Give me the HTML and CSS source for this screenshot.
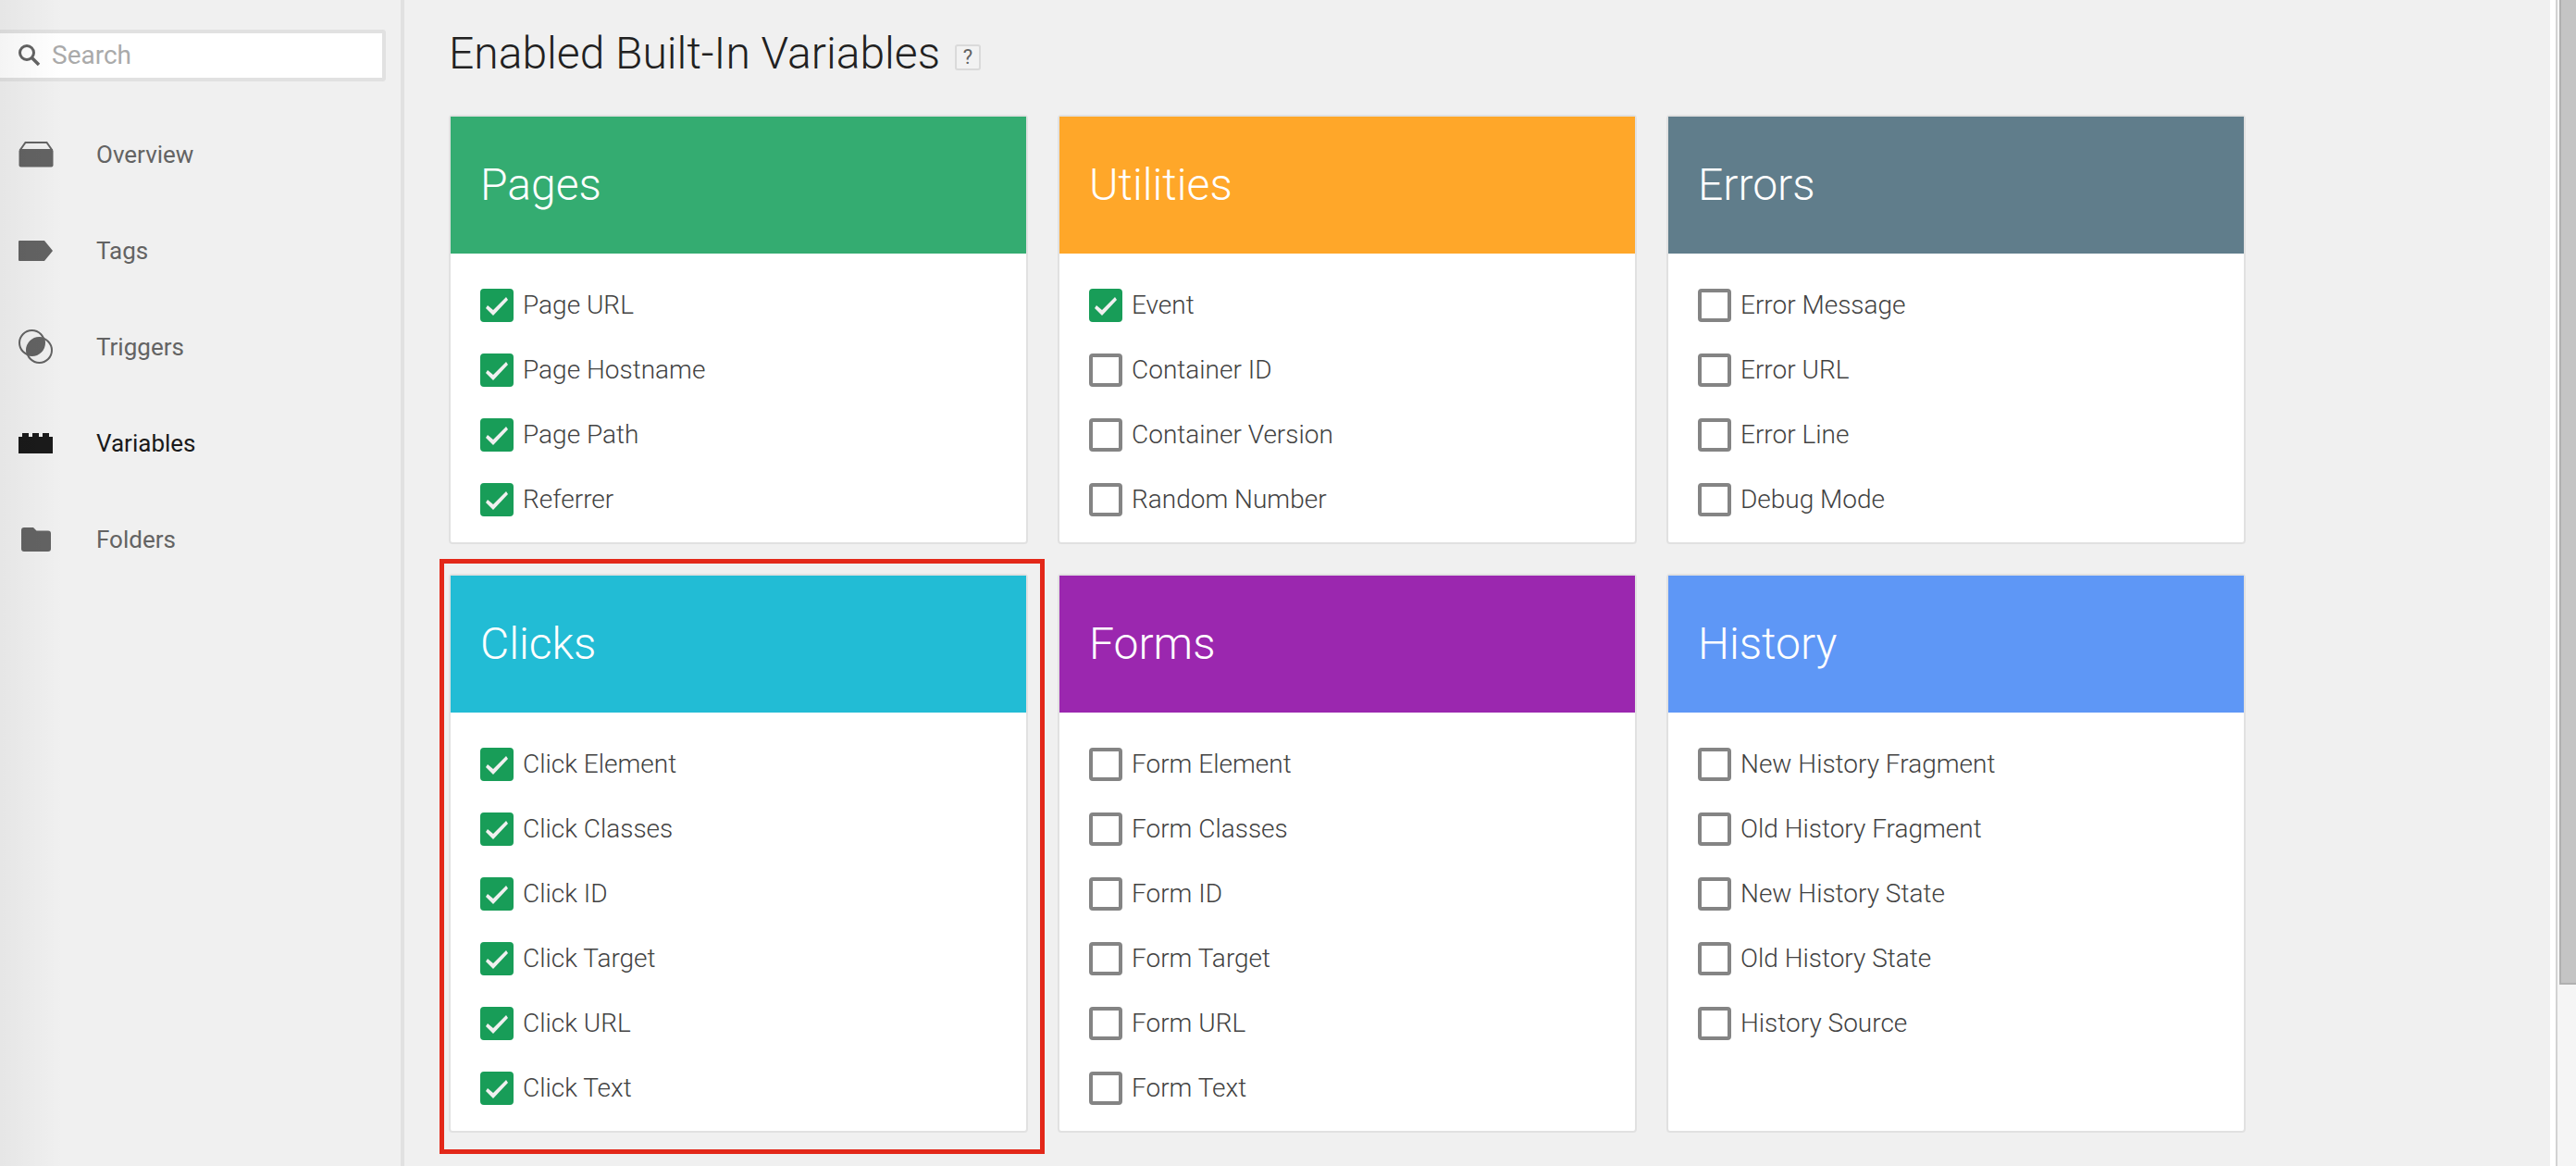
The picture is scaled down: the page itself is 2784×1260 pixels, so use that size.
FILE: index.html
```html
<!DOCTYPE html>
<html lang="en">
<head>
<meta charset="utf-8">
<title>Variables</title>
<link rel="stylesheet" href="styles.css">
</head>
<body>
<div class="app">
  <aside class="sidebar">
    <form class="search" role="search">
      <svg class="search-icon" viewBox="0 0 24 24" width="24" height="24" aria-hidden="true"><circle cx="9" cy="9" r="7.5" fill="none" stroke="currentColor" stroke-width="3"/><path d="M14.500 14.500L22 22" stroke="currentColor" stroke-width="3.600"/></svg>
      <input class="search-input" type="text" placeholder="Search" aria-label="Search">
    </form>
    <nav class="nav">
      <a class="nav-link" href="#overview"><svg class="nav-icon" viewBox="0 0 38 38" aria-hidden="true"><path d="M1.500 14.500L7.500 6h23l6 8.500" fill="none" stroke="currentColor" stroke-width="2"/><path d="M1.500 13h35l1 2v15.500a2 2 0 0 1-2 2h-33a2 2 0 0 1-2-2V15z" fill="currentColor"/></svg>Overview</a>
      <a class="nav-link" href="#tags"><svg class="nav-icon" viewBox="0 0 38 38" aria-hidden="true"><path d="M1 8h27l9 11-9 11H1a1 1 0 0 1-1-1V9a1 1 0 0 1 1-1z" fill="currentColor"/></svg>Tags</a>
      <a class="nav-link" href="#triggers"><svg class="nav-icon" viewBox="0 0 38 38" aria-hidden="true"><g fill="none" stroke="currentColor" stroke-width="2"><circle cx="14.500" cy="14.500" r="13.500"/><circle cx="22.500" cy="22.500" r="13.500"/></g><path d="M27.170 9.830A13.500 13.500 0 0 0 9.830 27.170A13.500 13.500 0 0 0 27.170 9.830z" fill="currentColor"/></svg>Triggers</a>
      <a class="nav-link active" href="#variables" aria-current="page"><svg class="nav-icon" viewBox="0 0 38 38" aria-hidden="true"><path d="M0 12h4V8h7v4h4V8h7v4h4V8h7v4h4v18H0z" fill="currentColor"/></svg>Variables</a>
      <a class="nav-link" href="#folders"><svg class="nav-icon" viewBox="0 0 38 38" aria-hidden="true"><path d="M6 6h10l3.500 3.500H32a3 3 0 0 1 3 3V29a3 3 0 0 1-3 3H6a3 3 0 0 1-3-3V9a3 3 0 0 1 3-3z" fill="currentColor"/></svg>Folders</a>
    </nav>
  </aside>
  <main class="main">
    <header class="title-row">
      <h1 class="title">Enabled Built-In Variables</h1>
      <button class="help" type="button" aria-label="Help">?</button>
    </header>
    <div class="grid">
      <section class="card">
        <h2 class="card-title pages">Pages</h2>
        <div class="options">
          <label class="option"><input type="checkbox" checked>Page URL</label>
          <label class="option"><input type="checkbox" checked>Page Hostname</label>
          <label class="option"><input type="checkbox" checked>Page Path</label>
          <label class="option"><input type="checkbox" checked>Referrer</label>
        </div>
      </section>
      <section class="card">
        <h2 class="card-title utilities">Utilities</h2>
        <div class="options">
          <label class="option"><input type="checkbox" checked>Event</label>
          <label class="option"><input type="checkbox">Container ID</label>
          <label class="option"><input type="checkbox">Container Version</label>
          <label class="option"><input type="checkbox">Random Number</label>
        </div>
      </section>
      <section class="card">
        <h2 class="card-title errors">Errors</h2>
        <div class="options">
          <label class="option"><input type="checkbox">Error Message</label>
          <label class="option"><input type="checkbox">Error URL</label>
          <label class="option"><input type="checkbox">Error Line</label>
          <label class="option"><input type="checkbox">Debug Mode</label>
        </div>
      </section>
      <section class="card highlighted">
        <h2 class="card-title clicks">Clicks</h2>
        <div class="options">
          <label class="option"><input type="checkbox" checked>Click Element</label>
          <label class="option"><input type="checkbox" checked>Click Classes</label>
          <label class="option"><input type="checkbox" checked>Click ID</label>
          <label class="option"><input type="checkbox" checked>Click Target</label>
          <label class="option"><input type="checkbox" checked>Click URL</label>
          <label class="option"><input type="checkbox" checked>Click Text</label>
        </div>
      </section>
      <section class="card">
        <h2 class="card-title forms">Forms</h2>
        <div class="options">
          <label class="option"><input type="checkbox">Form Element</label>
          <label class="option"><input type="checkbox">Form Classes</label>
          <label class="option"><input type="checkbox">Form ID</label>
          <label class="option"><input type="checkbox">Form Target</label>
          <label class="option"><input type="checkbox">Form URL</label>
          <label class="option"><input type="checkbox">Form Text</label>
        </div>
      </section>
      <section class="card">
        <h2 class="card-title history">History</h2>
        <div class="options">
          <label class="option"><input type="checkbox">New History Fragment</label>
          <label class="option"><input type="checkbox">Old History Fragment</label>
          <label class="option"><input type="checkbox">New History State</label>
          <label class="option"><input type="checkbox">Old History State</label>
          <label class="option"><input type="checkbox">History Source</label>
        </div>
      </section>
    </div>
  </main>
  <div class="scroll-track" aria-hidden="true"><div class="scroll-thumb"></div></div>
</div>
</body>
</html>
```

FILE: styles.css
```css
* {
  box-sizing: border-box;
}

body {
  margin: 0;
  background: #f0f0f0;
  color: #212121;
  font-family: Roboto, "Liberation Sans", sans-serif;
}

.app {
  display: flex;
  min-height: 100vh;
}

/* Sidebar */
.sidebar {
  position: relative;
  flex: 0 0 436px;
  padding-top: 32px;
  border-right: 4px solid #e1e1e1;
}

/* Soft shade along the window's left edge */
.sidebar::after {
  content: "";
  position: absolute;
  inset: 0 auto 0 0;
  width: 68px;
  background: linear-gradient(to right, rgba(0, 0, 0, 0.045), transparent);
  pointer-events: none;
}

.search {
  display: flex;
  align-items: center;
  gap: 12px;
  height: 56px;
  margin-right: 16px;
  padding-left: 20px;
  background: #fff;
  border: 4px solid #e1e1e1;
  border-left: 0;
  border-radius: 0 4px 4px 0;
  color: #636363;
}

.search-icon {
  flex: none;
}

.search-input {
  flex: 1;
  min-width: 0;
  padding: 0;
  border: 0;
  outline: 0;
  background: none;
  color: #212121;
  font: 400 28px/36px Roboto, "Liberation Sans", sans-serif;
}

.search-input::placeholder {
  color: #aaa;
  opacity: 1;
}

.nav {
  display: flex;
  flex-direction: column;
  padding-top: 27px;
}

.nav-link {
  display: flex;
  align-items: center;
  gap: 46px;
  height: 104px;
  padding-left: 20px;
  color: #636363;
  font-size: 26px;
  line-height: 32px;
  text-decoration: none;
}

.nav-link.active {
  color: #1a1a1a;
}

.nav-icon {
  flex: none;
  width: 38px;
  height: 38px;
}

/* Main column */
.main {
  flex: 1;
  min-width: 0;
  padding: 28px 48px 36px;
}

.title-row {
  display: flex;
  align-items: center;
  gap: 16px;
  margin-bottom: 36px;
}

.title {
  margin: 0;
  font-size: 48px;
  font-weight: 300;
  line-height: 60px;
}

.help {
  width: 28px;
  height: 28px;
  margin-top: 8px;
  padding: 0;
  background: #f2f2f2;
  border: 2px solid #dadada;
  border-radius: 3px;
  color: #636363;
  font: 400 22px/24px Roboto, "Liberation Sans", sans-serif;
}

.grid {
  display: grid;
  grid-template-columns: repeat(3, 1fr);
  gap: 32px;
  max-width: 1942px;
}

.card {
  position: relative;
  background: #fff;
  border: 2px solid #e1e1e1;
  border-radius: 4px;
}

/* Marker frame drawn over the gaps around a card */
.highlighted::after {
  content: "";
  position: absolute;
  inset: -18px -20px -25px -12px;
  border: 5px solid #e32819;
  pointer-events: none;
}

.card-title {
  margin: 0;
  padding: 44px 32px;
  color: #fff;
  font-size: 48px;
  font-weight: 300;
  line-height: 60px;
}

.pages { background: #34ac71; }
.utilities { background: #ffa729; }
.errors { background: #607d8b; }
.clicks { background: #22bcd5; }
.forms { background: #9b27af; }
.history { background: #5e97f6; }

.options {
  padding: 21px 32px 11px;
}

.option {
  display: flex;
  align-items: center;
  gap: 10px;
  height: 70px;
  color: #424242;
  font-size: 28px;
  font-weight: 300;
  line-height: 36px;
}

.option input {
  appearance: none;
  flex: none;
  width: 36px;
  height: 36px;
  margin: 0;
  background: #fff;
  border: 4px solid #848484;
  border-radius: 4px;
}

.option input:checked {
  background: #189d58;
  border-color: #189d58;
}

.option input:checked::before {
  content: "";
  display: block;
  width: 28px;
  height: 28px;
  background: #f0f0f0;
  clip-path: polygon(4px 14px, 2px 17px, 10px 25px, 26px 8px, 24px 5px, 10px 19px);
}

/* Scroll bar */
.scroll-track {
  flex: 0 0 28px;
  border-left: 6px solid #fff;
  background: #f5f5f5;
  box-shadow: inset 2px 0 #d2d2d2;
  padding-left: 4px;
}

.scroll-thumb {
  height: 1064px;
  max-height: 100%;
  background: #c4c4c4;
  border: solid #b0b0b0;
  border-width: 0 0 2px 2px;
}
```
